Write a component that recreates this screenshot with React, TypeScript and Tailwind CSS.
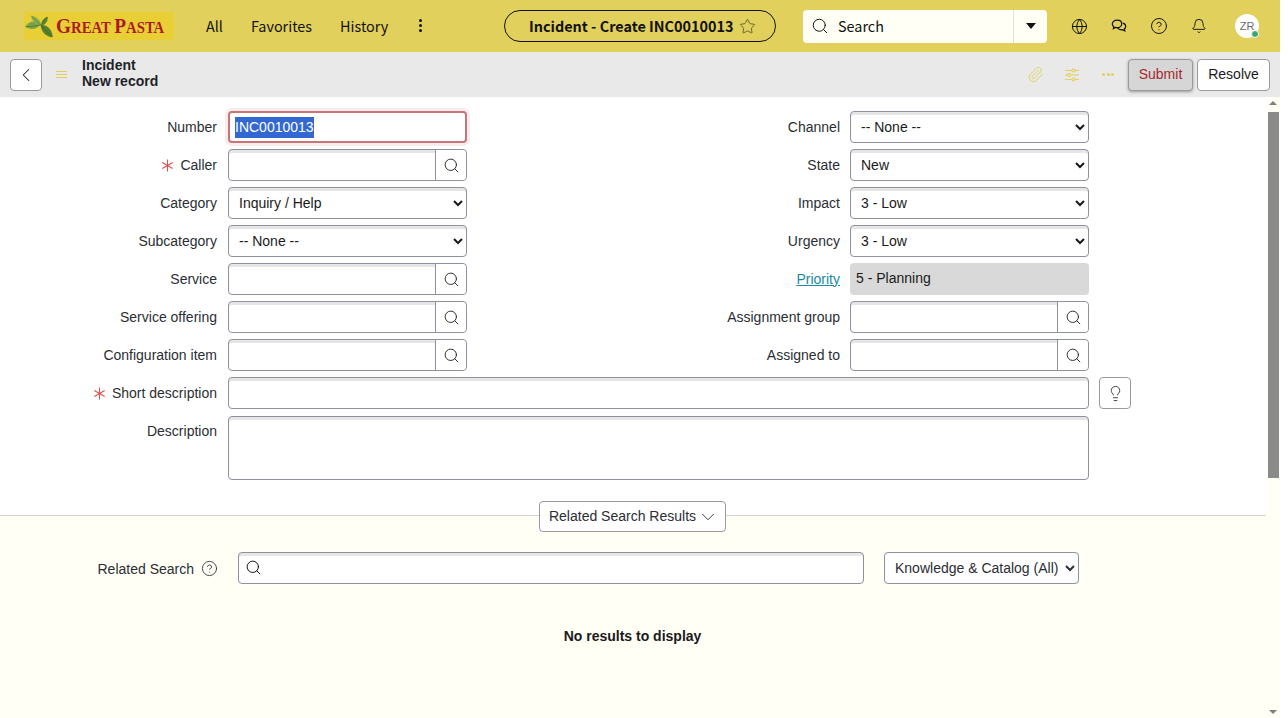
import { ChevronDown, ChevronLeft, CircleHelp, Bell, Globe, Lightbulb, Paperclip, Search, Star } from 'lucide-react'
import type { ReactNode } from 'react'

const sourceFont = "font-['Noto_Sans_CJK_SC',sans-serif]"

const inputBox =
  'rounded-[4px] border border-[#8e919e] bg-white shadow-[inset_0_3px_0_#e6e6e6]'
const selectBox =
  'h-[32px] w-[239px] rounded-[4px] border border-[#8e919e] bg-white pl-[6px] text-[14px] text-[#1a1a1a] shadow-[inset_0_3px_0_#e6e6e6]'

function Logo() {
  return (
    <div className="flex h-[28px] w-[150px] items-center bg-[#e8cf35]">
      <svg width="37" height="28" viewBox="0 0 37 28">
        <path d="M1 15 C6 8 13 7 19 12 C15 18 8 19 1 15Z" fill="#7ba346" />
        <path d="M8 2 C14 3 19 7 20 13 C14 13 9 9 8 2Z" fill="#8db04f" />
        <path d="M27 3 C28 8 25 12 20 14 C19 9 22 5 27 3Z" fill="#5c8a35" />
        <path d="M19 13 C27 12 32 18 33 27 C25 26 20 21 19 13Z" fill="#55802f" />
        <path d="M19 13 L32 26 M3 15 L19 13 M9 3 L19 13 M26 4 L20 13" stroke="#33591c" strokeWidth="0.6" fill="none" />
      </svg>
      <span className="ml-[0px] inline-block origin-left scale-x-[0.92] whitespace-nowrap font-['Liberation_Serif',serif] text-[16px] leading-none font-bold text-[#ab1c22] uppercase">
        <span className="text-[21px]">G</span>reat <span className="text-[21px]">P</span>asta
      </span>
    </div>
  )
}

function ChatIcon() {
  return (
    <svg width="16" height="16" viewBox="0 0 16 16" fill="none" stroke="#111" strokeWidth="1.2">
      <path d="M6.200 2.200C3.400 2.200 1.300 3.800 1.300 5.900c0 1.100.6 2.100 1.500 2.800l-.4 1.800 2.100-1.100c.5.1 1 .2 1.600.2 2.600 0 4.600-1.600 4.600-3.700S8.800 2.200 6.200 2.200Z" />
      <path d="M11.700 5.200c1.800.4 3 1.700 3 3.200 0 1-.5 1.900-1.300 2.500l.4 2-2.100-1.200c-.4.1-.8.100-1.200.1-1.800 0-3.300-.8-4-2" />
    </svg>
  )
}

function TuneIcon() {
  return (
    <svg width="16" height="16" viewBox="0 0 16 16" fill="none" stroke="#e2d05c" strokeWidth="1.2">
      <path d="M1 3.500h7M11 3.500h4M1 8h2.500M6.500 8H15M1 12.500h7M11 12.500h4" />
      <circle cx="9.500" cy="3.500" r="1.500" />
      <circle cx="5" cy="8" r="1.500" />
      <circle cx="9.500" cy="12.500" r="1.500" />
    </svg>
  )
}

function TopBar() {
  return (
    <header className="flex h-[52px] items-center bg-[#e2d05c] pl-[24px] text-[#111]">
      <Logo />
      <nav className={`ml-[32px] flex w-[298px] items-center text-[14.4px] ${sourceFont}`}>
        <span>All</span>
        <span className="ml-[28px]">Favorites</span>
        <span className="ml-[28px]">History</span>
        <span className="ml-[31px] flex flex-col gap-[2px]">
          <i className="size-[3px] rounded-full bg-[#111]" />
          <i className="size-[3px] rounded-full bg-[#111]" />
          <i className="size-[3px] rounded-full bg-[#111]" />
        </span>
      </nav>
      <div className={`flex h-[32px] w-[272px] items-center rounded-full border border-[#111] pl-[24px] text-[14.4px] font-bold ${sourceFont}`}>
        <span className="whitespace-nowrap">Incident - Create INC0010013</span>
        <Star className="ml-[6px] text-[#4a4a2a]" size={17} strokeWidth={1.1} />
      </div>
      <div className="ml-[27px] flex h-[33px] w-[244px] items-center rounded-[4px] bg-[#fffff6]">
        <Search className="ml-[8px]" size={18} strokeWidth={1.3} />
        <span className={`ml-[9px] flex-1 text-[14.4px] ${sourceFont}`}>Search</span>
        <div className="flex h-full w-[34px] items-center justify-center border-l border-[#e4e2d0]">
          <span className="border-x-[5px] border-t-[6px] border-x-transparent border-t-[#111]" />
        </div>
      </div>
      <div className="ml-[12px] flex items-center">
        <span className="flex w-[40px] justify-center"><Globe size={17} strokeWidth={1.4} /></span>
        <span className="flex w-[40px] justify-center"><ChatIcon /></span>
        <span className="flex w-[40px] justify-center"><CircleHelp size={18} strokeWidth={1.3} /></span>
        <span className="flex w-[40px] justify-center"><Bell size={16} strokeWidth={1.4} /></span>
        <div className="relative ml-[16px] flex size-[24px] items-center justify-center rounded-full bg-white text-[11px] text-[#6b6b6b]">
          ZR
          <span className="absolute right-[0px] bottom-[0px] size-[8px] rounded-full border border-white bg-[#3aa76d]" />
        </div>
      </div>
    </header>
  )
}

function SubBar() {
  return (
    <div className="flex h-[45px] items-center bg-[#e9e9e9] pr-[10px] pl-[10px]">
      <button className="flex size-[32px] items-center justify-center rounded-[4px] border border-[#9a9a9a] bg-white">
        <ChevronLeft size={22} strokeWidth={1.1} className="text-[#222]" />
      </button>
      <div className="ml-[14px] flex flex-col gap-[2px]">
        <i className="h-px w-[11px] bg-[#e2d05c]" />
        <i className="h-px w-[11px] bg-[#e2d05c]" />
        <i className="h-px w-[11px] bg-[#e2d05c]" />
      </div>
      <div className="ml-[15px] pb-[3px] text-[14px] leading-[16px] font-bold text-[#1f2328]">
        <div>Incident</div>
        <div>New record</div>
      </div>
      <div className="ml-auto flex items-center">
        <Paperclip size={17} strokeWidth={1.3} className="ml-[1px] text-[#e2d05c]" />
        <span className="ml-[20px]"><TuneIcon /></span>
        <span className="ml-[22px] flex gap-[1.5px]">
          <i className="size-[3px] rounded-full bg-[#e2d05c]" />
          <i className="size-[3px] rounded-full bg-[#e2d05c]" />
          <i className="size-[3px] rounded-full bg-[#e2d05c]" />
        </span>
        <button className="ml-[14px] h-[32px] w-[65px] rounded-[4px] border border-[#9a9a9a] bg-[#d6d6d6] text-[14px] text-[#a32a2e] shadow-[0_1px_3px_rgba(0,0,0,0.35)]">
          Submit
        </button>
        <button className="ml-[4px] h-[32px] w-[73px] rounded-[4px] border border-[#9a9a9a] bg-white text-[14px] text-[#1a1a1a]">
          Resolve
        </button>
      </div>
    </div>
  )
}

function LookupInput() {
  return (
    <div className={`flex h-[32px] w-[239px] ${inputBox}`}>
      <div className="flex-1" />
      <div className="flex w-[31px] items-center justify-center rounded-r-[4px] border-l border-[#8e919e] bg-white">
        <Search size={17} strokeWidth={1.3} className="text-[#222]" />
      </div>
    </div>
  )
}

function Required() {
  return (
    <svg className="mr-[6px]" width="13" height="13" viewBox="0 0 13 13" stroke="#e0504c" strokeWidth="1.1" fill="none">
      <path d="M6.500 0.500v12M1.300 3.500l10.400 6M1.300 9.500l10.400-6" />
    </svg>
  )
}

function Row({ children }: { children: ReactNode }) {
  return <div className="flex h-[32px] items-center">{children}</div>
}

function Label({ text, required }: { text: ReactNode; required?: boolean }) {
  return (
    <div className="flex w-[228px] items-center justify-end pr-[11px] text-[14px] text-[#2b2e33]">
      {required && <Required />}
      {text}
    </div>
  )
}

function RightLabel({ text }: { text: ReactNode }) {
  return (
    <div className="flex w-[383px] items-center justify-end pr-[10px] text-[14px] text-[#2b2e33]">
      {text}
    </div>
  )
}

function FormArea() {
  return (
    <div className="flex flex-col gap-[6px] pt-[14px]">
      <Row>
        <Label text="Number" />
        <div className="flex h-[32px] w-[239px] items-center rounded-[4px] border-2 border-[#c87478] bg-white pl-[5px] text-[14px] text-white shadow-[0_0_0_3px_#f8eded]">
          <span className="bg-[#3367d1]">INC0010013</span>
        </div>
        <RightLabel text="Channel" />
        <select className={selectBox}><option>-- None --</option></select>
      </Row>
      <Row>
        <Label text="Caller" required />
        <LookupInput />
        <RightLabel text="State" />
        <select className={selectBox}><option>New</option></select>
      </Row>
      <Row>
        <Label text="Category" />
        <select className={selectBox}><option>Inquiry / Help</option></select>
        <RightLabel text="Impact" />
        <select className={selectBox}><option>3 - Low</option></select>
      </Row>
      <Row>
        <Label text="Subcategory" />
        <select className={selectBox}><option>-- None --</option></select>
        <RightLabel text="Urgency" />
        <select className={selectBox}><option>3 - Low</option></select>
      </Row>
      <Row>
        <Label text="Service" />
        <LookupInput />
        <RightLabel text={<span className="text-[#1a8a9e] underline">Priority</span>} />
        <div className="h-[32px] w-[239px] rounded-[4px] bg-[#d9d9d9] pt-[6px] pl-[6px] text-[14px] leading-[18px] text-[#1a1a1a]">
          5 - Planning
        </div>
      </Row>
      <Row>
        <Label text="Service offering" />
        <LookupInput />
        <RightLabel text="Assignment group" />
        <LookupInput />
      </Row>
      <Row>
        <Label text="Configuration item" />
        <LookupInput />
        <RightLabel text="Assigned to" />
        <LookupInput />
      </Row>
      <Row>
        <Label text="Short description" required />
        <div className={`h-[32px] w-[861px] ${inputBox}`} />
        <button className="ml-[10px] flex h-[32px] w-[32px] items-center justify-center rounded-[4px] border border-[#9a9a9a] bg-white">
          <Lightbulb size={17} strokeWidth={1.2} className="text-[#222]" />
        </button>
      </Row>
      <div className="mt-[1px] flex">
        <div className="flex h-[30px] w-[228px] items-center justify-end pr-[11px] text-[14px] text-[#2b2e33]">Description</div>
        <div className={`h-[64px] w-[861px] ${inputBox}`} />
      </div>
    </div>
  )
}

function RelatedSearch() {
  return (
    <div className="flex flex-1 flex-col border-t border-[#d4d4d4] bg-[#fffff6]">
      <div className="-mt-[15px] flex justify-center pr-[1px]">
        <button className="flex h-[31px] w-[187px] items-center justify-center gap-[1px] rounded-[4px] border border-[#9a9a9a] bg-white pl-[3px] text-[14px] text-[#2b2e33]">
          Related Search Results
          <ChevronDown size={22} strokeWidth={1} />
        </button>
      </div>
      <div className="mt-[20px] flex h-[32px] items-center">
        <div className="flex w-[238px] items-center justify-end pr-[20px] text-[14px] text-[#2b2e33]">
          <span className="mt-[2px]">Related Search</span>
          <CircleHelp className="ml-[7px]" size={17} strokeWidth={1.2} />
        </div>
        <div className={`flex h-[32px] w-[626px] items-center ${inputBox}`}>
          <Search className="-mt-[2px] ml-[6px]" size={17} strokeWidth={1.3} />
        </div>
        <select className="ml-[20px] h-[32px] w-[195px] rounded-[4px] border border-[#8e919e] bg-white pl-[6px] text-[14px] text-[#2b2e33]">
          <option>Knowledge & Catalog (All)</option>
        </select>
      </div>
      <p className="mt-[43px] pr-[1px] text-center text-[14px] leading-[18px] font-bold text-[#1a1a1a]">No results to display</p>
    </div>
  )
}

function ScrollTrack() {
  return (
    <div className="flex w-[14px] flex-col items-center bg-[#fffff6]">
      <span className="mt-[4px] border-x-[4px] border-b-[4px] border-x-transparent border-b-[#7f7f7f]" />
      <div className="mt-[7px] h-[366px] w-[11px] bg-[#8a8a8a]" />
      <span className="mt-auto mb-[4px] border-x-[4px] border-t-[4px] border-x-transparent border-t-[#7f7f7f]" />
    </div>
  )
}

export default function App() {
  return (
    <div className="flex h-[718px] w-[1280px] flex-col overflow-hidden bg-white font-['Liberation_Sans',sans-serif]">
      <TopBar />
      <SubBar />
      <div className="flex flex-1">
        <main className="flex w-[1266px] flex-col">
          <div className="h-[418px] shrink-0">
            <FormArea />
          </div>
          <RelatedSearch />
        </main>
        <ScrollTrack />
      </div>
    </div>
  )
}
